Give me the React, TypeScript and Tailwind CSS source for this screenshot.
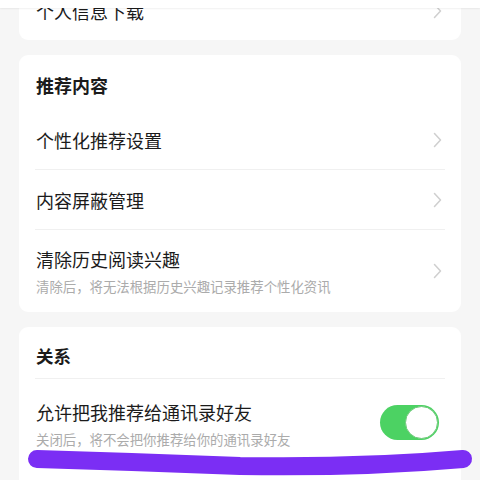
import React from 'react';

const font = { fontFamily: '"Noto Sans CJK SC", "Noto Sans", sans-serif' };

function Chevron() {
  return (
    <svg width="9" height="16" viewBox="0 0 9 16" fill="none" className="shrink-0">
      <path d="M1.5 1.5 L7.5 8 L1.5 14.5" stroke="#cfcfcf" strokeWidth="1.5" strokeLinecap="round" strokeLinejoin="round" />
    </svg>
  );
}

function Toggle() {
  return (
    <div className="relative w-[59px] h-[35px] rounded-full bg-[#4cd263] shrink-0">
      <div className="absolute right-[1px] top-[1px] w-[33px] h-[33px] rounded-full bg-white border border-[#6fc97a]" />
    </div>
  );
}

interface RowProps {
  title: string;
  sub?: string;
  divider?: boolean;
  right?: React.ReactNode;
  height: string;
}

function Row({ title, sub, divider = true, right, height }: RowProps) {
  return (
    <div className={`mx-[16px] flex items-center justify-between ${height} ${divider ? 'border-b border-[#f0f0f0]' : ''}`}>
      <div className="flex flex-col pl-[1px]">
        <span className="text-[18px] leading-[24px] text-[#1b1b1b]">{title}</span>
        {sub && <span className="mt-[5px] text-[13.4px] leading-[20px] text-[#ababab]">{sub}</span>}
      </div>
      <div className={right ? 'pr-[6px] mt-[-4px]' : 'pr-[3px]'}>{right ?? <Chevron />}</div>
    </div>
  );
}

export default function App() {
  return (
    <div className="relative w-[480px] h-[480px] overflow-hidden bg-[#f6f6f6]" style={font}>
      <div className="absolute left-0 right-0 top-0 h-[8px] bg-white shadow-[0_1px_2px_rgba(0,0,0,0.06)] z-10" />

      <div className="flex flex-col gap-[15px] mx-[19px] mt-[-18px]">
        <div className="bg-white rounded-[9px]">
          <Row title="个人信息下载" divider={false} height="h-[58px]" />
        </div>

        <div className="bg-white rounded-[9px]">
          <div className="h-[55px] pt-[5px] px-[17px] flex items-center">
            <span className="text-[18px] font-bold text-[#1b1b1b]">推荐内容</span>
          </div>
          <Row title="个性化推荐设置" height="h-[60px]" />
          <Row title="内容屏蔽管理" height="h-[60px]" />
          <Row
            title="清除历史阅读兴趣"
            sub="清除后，将无法根据历史兴趣记录推荐个性化资讯"
            divider={false}
            height="h-[82px]"
          />
        </div>

        <div className="bg-white rounded-[9px] pb-[20px]">
          <div className="h-[52px] pt-[8px] mx-[16px] px-[1px] flex items-center border-b border-[#f0f0f0]">
            <span className="text-[17.5px] font-bold text-[#1b1b1b]">关系</span>
          </div>
          <Row
            title="允许把我推荐给通讯录好友"
            sub="关闭后，将不会把你推荐给你的通讯录好友"
            divider={false}
            height="h-[90px]"
            right={<Toggle />}
          />
        </div>
      </div>

      <svg className="absolute left-0 top-0 pointer-events-none" width="480" height="480" viewBox="0 0 480 480">
        <path d="M37 459 Q 140 462 240 466 Q 360 468 463 459" stroke="#7b2ef4" strokeWidth="18" strokeLinecap="round" fill="none" />
      </svg>
    </div>
  );
}
